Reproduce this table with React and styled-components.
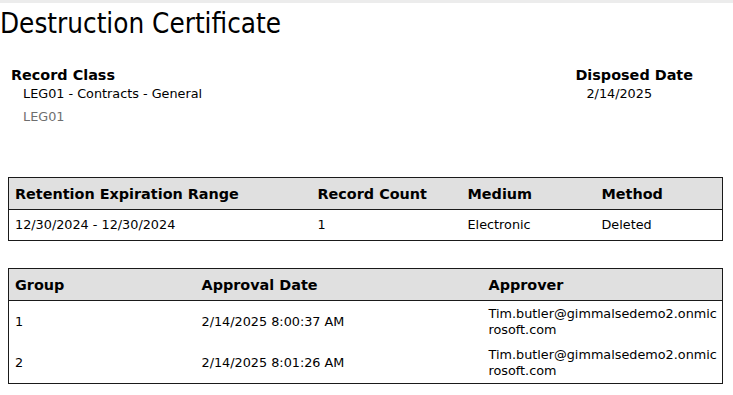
import React from "react";
import styled, { createGlobalStyle } from "styled-components";

const Global = createGlobalStyle`
  html, body { margin: 0; padding: 0; background: #fff; }
  body { font-family: "DejaVu Sans", Verdana, sans-serif; color: #000; }
`;

const Page = styled.div`
  width: 733px;
  height: 395px;
  overflow: hidden;
  display: flex;
  flex-direction: column;
`;

const TopStrip = styled.div`
  height: 3px;
  background: #ececec;
`;

const Title = styled.h1`
  margin: 5px 0 0 0;
  font-family: "DejaVu Sans Condensed", "DejaVu Sans", sans-serif;
  font-stretch: condensed;
  font-size: 27.6px;
  font-weight: normal;
  line-height: 32px;
`;

const InfoRow = styled.div`
  display: flex;
  justify-content: space-between;
  margin-top: 26px;
  padding: 0 40px 0 11px;
`;

const InfoBlock = styled.div`
  display: flex;
  flex-direction: column;
`;

const InfoLabel = styled.div`
  font-size: 14.4px;
  font-weight: bold;
  line-height: 18px;
`;

const InfoValue = styled.div`
  font-size: 12.8px;
  line-height: 16px;
  padding-left: ${(p) => p.$indent}px;
  color: ${(p) => (p.$muted ? "#6e6e6e" : "#000")};
  margin-top: ${(p) => (p.$muted ? 7 : 2)}px;
`;

const Table = styled.table`
  margin: ${(p) => p.$top}px 8px 0 8px;
  width: 715px;
  border-collapse: collapse;
  border: 1px solid #1a1a1a;
  table-layout: fixed;
`;

const HeadCell = styled.th`
  background: #e0e0e0;
  text-align: left;
  font-size: 14.4px;
  font-weight: bold;
  height: 31px;
  padding: 0 6px;
  border-bottom: 1px solid #1a1a1a;
  vertical-align: middle;
`;

const Cell = styled.td`
  font-size: 12.8px;
  line-height: 16px;
  height: ${(p) => p.$h}px;
  padding: 0 1px 0 6px;
  vertical-align: middle;
  word-break: break-all;
`;

const retention = [
  { range: "12/30/2024 - 12/30/2024", count: "1", medium: "Electronic", method: "Deleted" },
];

const approvals = [
  { group: "1", date: "2/14/2025 8:00:37 AM", approver: "Tim.butler@gimmalsedemo2.onmicrosoft.com" },
  { group: "2", date: "2/14/2025 8:01:26 AM", approver: "Tim.butler@gimmalsedemo2.onmicrosoft.com" },
];

export default function App() {
  return (
    <Page>
      <Global />
      <TopStrip />
      <Title>Destruction Certificate</Title>
      <InfoRow>
        <InfoBlock>
          <InfoLabel>Record Class</InfoLabel>
          <InfoValue $indent={12}>LEG01 - Contracts - General</InfoValue>
          <InfoValue $indent={12} $muted>LEG01</InfoValue>
        </InfoBlock>
        <InfoBlock>
          <InfoLabel>Disposed Date</InfoLabel>
          <InfoValue $indent={11}>2/14/2025</InfoValue>
        </InfoBlock>
      </InfoRow>
      <Table $top={52}>
        <colgroup>
          <col style={{ width: 303 }} />
          <col style={{ width: 150 }} />
          <col style={{ width: 134 }} />
          <col />
        </colgroup>
        <thead>
          <tr>
            <HeadCell>Retention Expiration Range</HeadCell>
            <HeadCell>Record Count</HeadCell>
            <HeadCell>Medium</HeadCell>
            <HeadCell>Method</HeadCell>
          </tr>
        </thead>
        <tbody>
          {retention.map((r, i) => (
            <tr key={i}>
              <Cell $h={30}>{r.range}</Cell>
              <Cell $h={30}>{r.count}</Cell>
              <Cell $h={30}>{r.medium}</Cell>
              <Cell $h={30}>{r.method}</Cell>
            </tr>
          ))}
        </tbody>
      </Table>
      <Table $top={27}>
        <colgroup>
          <col style={{ width: 187 }} />
          <col style={{ width: 287 }} />
          <col />
        </colgroup>
        <thead>
          <tr>
            <HeadCell>Group</HeadCell>
            <HeadCell>Approval Date</HeadCell>
            <HeadCell>Approver</HeadCell>
          </tr>
        </thead>
        <tbody>
          {approvals.map((r, i) => (
            <tr key={i}>
              <Cell $h={41}>{r.group}</Cell>
              <Cell $h={41}>{r.date}</Cell>
              <Cell $h={41}>{r.approver}</Cell>
            </tr>
          ))}
        </tbody>
      </Table>
    </Page>
  );
}
